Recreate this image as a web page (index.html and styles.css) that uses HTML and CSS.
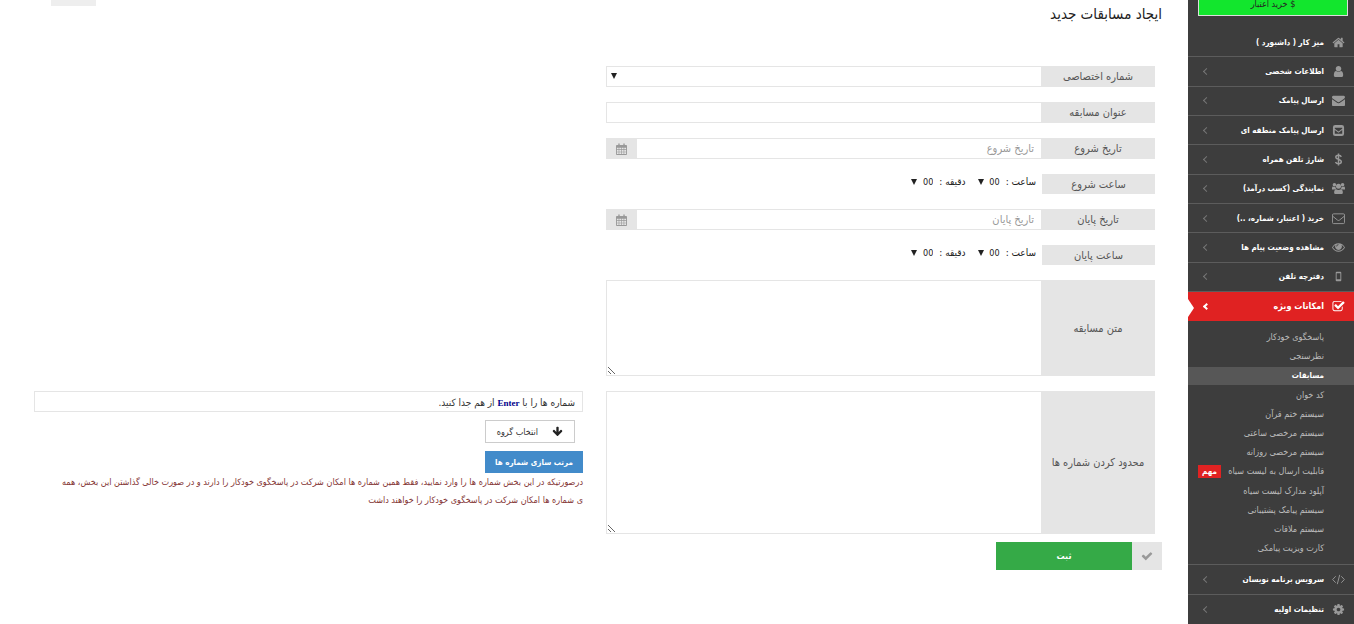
FILE: index.html
```html
<!DOCTYPE html>
<html lang="fa" dir="rtl">
<head>
  <meta charset="UTF-8">
  <meta name="viewport" content="width=device-width, initial-scale=1">
  <title>ایجاد مسابقات جدید</title>
  <link rel="stylesheet" href="styles.css">
</head>
<body>

  <aside class="sidebar">
    <a href="#" class="credit">$ خرید اعتبار</a>

    <ul class="menu">
      <li><a href="#">
        <svg class="icon" viewBox="0 0 1792 1792"><path d="M1472 992v480q0 26-19 45t-45 19h-384v-384h-256v384h-384q-26 0-45-19t-19-45v-480q0-1 .5-3t.5-3l575-474 575 474q1 2 1 6zm223-69l-62 74q-8 9-21 11h-3q-13 0-21-7l-692-577-692 577q-12 8-24 7-13-2-21-11l-62-74q-8-10-7-23.5t11-21.5l719-599q32-26 76-26t76 26l244 204v-195q0-14 9-23t23-9h192q14 0 23 9t9 23v408l219 182q10 8 11 21.5t-7 23.5z"/></svg>
        <span>میز کار ( داشبورد )</span></a></li>
      <li><a href="#">
        <svg class="icon" viewBox="0 0 1792 1792"><path d="M1536 1399q0 109-62.5 187t-150.5 78h-854q-88 0-150.5-78t-62.5-187q0-85 8.5-160.5t31.5-152 58.5-131 94-89 134.5-34.5q131 128 313 128t313-128q76 0 134.5 34.5t94 89 58.5 131 31.5 152 8.5 160.5zm-256-887q0 159-112.5 271.5t-271.5 112.5-271.5-112.5-112.5-271.5 112.5-271.5 271.5-112.5 271.5 112.5 112.5 271.5z"/></svg>
        <span>اطلاعات شخصی</span><i class="arrow"></i></a></li>
      <li><a href="#">
        <svg class="icon" viewBox="0 0 1792 1792"><path d="M1792 710v794q0 66-47 113t-113 47h-1472q-66 0-113-47t-47-113v-794q44 49 101 87 362 246 497 345 57 42 92.5 65.5t94.5 48 110 24.5h2q51 0 110-24.5t94.5-48 92.5-65.5q170-123 498-345 57-39 100-87zm0-294q0 79-49 151t-122 123q-376 261-468 325-10 7-42.5 31t-54 38.5-52 32.5-57.5 27-50 9h-2q-23 0-50-9t-57.5-27-52-32.5-54-38.5-42.5-31q-91-64-262-182.5t-205-142.5q-62-42-117-115.5t-55-136.5q0-78 41.5-130t118.5-52h1472q65 0 112.5 47t47.5 113z"/></svg>
        <span>ارسال پیامک</span><i class="arrow"></i></a></li>
      <li><a href="#">
        <svg class="icon" viewBox="0 0 14 14"><path fill-rule="evenodd" d="M3.500 1h7a2.500 2.500 0 0 1 2.500 2.500v7a2.500 2.500 0 0 1-2.500 2.500h-7a2.500 2.500 0 0 1-2.500-2.500v-7a2.500 2.500 0 0 1 2.500-2.500zM3 4v1l4 3 4-3v-1zM3 6.500v4h8v-4l-4 3z"/></svg>
        <span>ارسال پیامک منطقه ای</span><i class="arrow"></i></a></li>
      <li><a href="#">
        <svg class="icon line" viewBox="0 0 14 14"><path stroke-width="1.600" d="M10 4.200C9.500 3 8.500 2.500 7 2.500 5.200 2.500 4.100 3.300 4.100 4.600 4.100 7.500 10 6.200 10 9.300c0 1.400-1.200 2.200-3 2.200-1.600 0-2.700-.6-3.200-1.900M7 .5v13"/></svg>
        <span>شارژ تلفن همراه</span><i class="arrow"></i></a></li>
      <li><a href="#">
        <svg class="icon" viewBox="0 0 14 14"><circle cx="2.600" cy="3" r="1.900"/><circle cx="11.400" cy="3" r="1.900"/><circle cx="7" cy="4.600" r="2.700"/><path d="M0 8V6.500C0 5.400.5 4.800 1.200 4.800c.8.600 1.700.7 2.500.4 0 1 .3 1.700.8 2.300C3.600 7.500 3 7.700 2.600 8zM14 8V6.500c0-1.100-.5-1.700-1.200-1.700-.8.600-1.700.7-2.500.4 0 1-.3 1.700-.8 2.300.9 0 1.500.2 1.900.5zM2.300 11.500C2.300 9 3 7.800 4.500 7.700c1.600 1.100 3.400 1.100 5 0 1.500.1 2.200 1.300 2.200 3.800 0 1-.7 1.500-1.600 1.500H3.900c-.9 0-1.600-.5-1.600-1.500z"/></svg>
        <span>نمایندگی (کسب درآمد)</span><i class="arrow"></i></a></li>
      <li><a href="#">
        <svg class="icon line" viewBox="0 0 14 14"><rect x=".5" y="2" width="13" height="10.500" rx="1.200"/><path d="M.7 4.500 6 8.800q1 .7 2 0l5.300-4.300"/></svg>
        <span>خرید ( اعتبار، شماره، ..)</span><i class="arrow"></i></a></li>
      <li><a href="#">
        <svg class="icon" viewBox="0 0 14 14"><path fill-rule="evenodd" d="M7 2.500c3 0 5.500 1.700 7 4.500-1.500 2.800-4 4.500-7 4.500S1.500 9.800 0 7c1.500-2.800 4-4.500 7-4.500zM3.700 4.300C2.600 4.900 1.700 5.800 1 7c1.400 2.200 3.600 3.500 6 3.500S11.600 9.200 13 7c-.7-1.200-1.600-2.100-2.700-2.700a3.700 3.700 0 1 1-6.600 0zM7 3.500A2.400 2.400 0 0 0 4.600 6h.8A1.700 1.700 0 0 1 7 4.300z"/></svg>
        <span>مشاهده وضعیت پیام ها</span><i class="arrow"></i></a></li>
      <li><a href="#">
        <svg class="icon" viewBox="0 0 14 14"><path fill-rule="evenodd" d="M5 2h4a1 1 0 0 1 1 1v8a1 1 0 0 1-1 1H5a1 1 0 0 1-1-1V3a1 1 0 0 1 1-1zM5 3.500v6.500h4V3.500z"/></svg>
        <span>دفترچه تلفن</span><i class="arrow"></i></a></li>
      <li class="active"><a href="#">
        <svg class="icon" viewBox="0 0 1792 1792"><path d="M1472 930v318q0 119-84.500 203.500t-203.500 84.500h-832q-119 0-203.500-84.500t-84.500-203.500v-832q0-119 84.500-203.500t203.500-84.500h832q63 0 117 25 15 7 18 23 3 17-9 29l-49 49q-10 10-23 10-3 0-9-2-23-6-45-6h-832q-66 0-113 47t-47 113v832q0 66 47 113t113 47h832q66 0 113-47t47-113v-254q0-13 9-22l64-64q10-10 23-10 6 0 12 3 20 8 20 29zm231-489l-814 814q-24 24-57 24t-57-24l-430-430q-24-24-24-57t24-57l110-110q24-24 57-24t57 24l263 263 647-647q24-24 57-24t57 24l110 110q24 24 24 57t-24 57z"/></svg>
        <span>امکانات ویژه</span><i class="arrow"></i></a></li>
      <li class="sub">
        <ul class="submenu">
          <li><a href="#">پاسخگوی خودکار</a></li>
          <li><a href="#">نظرسنجی</a></li>
          <li class="current"><a href="#">مسابقات</a></li>
          <li><a href="#">کد خوان</a></li>
          <li><a href="#">سیستم ختم قرآن</a></li>
          <li><a href="#">سیستم مرخصی ساعتی</a></li>
          <li><a href="#">سیستم مرخصی روزانه</a></li>
          <li><a href="#">قابلیت ارسال به لیست سیاه <span class="badge">مهم</span></a></li>
          <li><a href="#">آپلود مدارک لیست سیاه</a></li>
          <li><a href="#">سیستم پیامک پشتیبانی</a></li>
          <li><a href="#">سیستم ملاقات</a></li>
          <li><a href="#">کارت ویزیت پیامکی</a></li>
        </ul>
      </li>
      <li><a href="#">
        <svg class="icon line" viewBox="0 0 14 14"><path d="M4 3.500.7 7 4 10.500M10 3.500 13.300 7 10 10.500M8.300 2 5.700 12"/></svg>
        <span>سرویس برنامه نویسان</span><i class="arrow"></i></a></li>
      <li><a href="#">
        <svg class="icon" viewBox="0 0 1792 1792"><path d="M1152 896q0-106-75-181t-181-75-181 75-75 181 75 181 181 75 181-75 75-181zm512-109v222q0 12-8 23t-20 13l-185 28q-19 54-39 91 35 50 107 138 10 12 10 25t-9 23q-27 37-99 108t-94 71q-12 0-26-9l-138-108q-44 23-91 38-16 136-29 186-7 28-36 28h-222q-14 0-24.500-8.500t-11.500-21.500l-28-184q-49-16-90-37l-141 107q-10 9-25 9-14 0-25-11-126-114-165-168-7-10-7-23 0-12 8-23 15-21 51-66.500t54-70.500q-27-50-41-99l-183-27q-13-2-21-12.500t-8-23.500v-222q0-12 8-23t19-13l186-28q14-46 39-92-40-57-107-138-10-12-10-24 0-10 9-23 26-36 98.500-107.500t94.500-71.500q13 0 26 10l138 107q44-23 91-38 16-136 29-186 7-28 36-28h222q14 0 24.500 8.500t11.500 21.500l28 184q49 16 90 37l142-107q9-9 24-9 13 0 25 10 129 119 165 170 7 8 7 22 0 12-8 23-15 21-51 66.500t-54 70.500q26 50 41 98l183 28q13 2 21 12.500t8 23.500z"/></svg>
        <span>تنظیمات اولیه</span><i class="arrow"></i></a></li>
    </ul>
  </aside>

  <main class="content">
    <div class="tab"></div>
    <h1>ایجاد مسابقات جدید</h1>

    <form class="form">
      <div class="fields">
        <div class="row">
          <label for="number">شماره اختصاصی</label>
          <span class="select wide"><select id="number"><option></option></select></span>
        </div>
        <div class="row">
          <label for="title">عنوان مسابقه</label>
          <input type="text" id="title">
        </div>
        <div class="row">
          <label for="startDate">تاریخ شروع</label>
          <input type="text" id="startDate" placeholder="تاریخ شروع">
          <span class="addon"><svg viewBox="0 0 12 13"><path fill-rule="evenodd" d="M1 2h1.500V.5h1.500V2h4V.5h1.500V2H11a1 1 0 0 1 1 1v9a1 1 0 0 1-1 1H1a1 1 0 0 1-1-1V3a1 1 0 0 1 1-1zM1 5v1.900h1.900V5zM3.600 5v1.900h2V5zM6.300 5v1.900h2V5zM9 5v1.900h2V5zM1 7.600v1.800h1.900V7.600zM3.600 7.600v1.800h2V7.600zM6.300 7.600v1.800h2V7.600zM9 7.600v1.800h2V7.600zM1 10.100V12h1.900v-1.900zM3.600 10.100V12h2v-1.900zM6.300 10.100V12h2v-1.900zM9 10.100V12h2v-1.900z"/></svg></span>
        </div>
        <div class="row time">
          <span class="label">ساعت شروع</span>
          <label for="startHour">ساعت :</label>
          <span class="select"><select id="startHour"><option>00</option></select></span>
          <label for="startMin">دقیقه :</label>
          <span class="select"><select id="startMin"><option>00</option></select></span>
        </div>
        <div class="row">
          <label for="endDate">تاریخ پایان</label>
          <input type="text" id="endDate" placeholder="تاریخ پایان">
          <span class="addon"><svg viewBox="0 0 12 13"><path fill-rule="evenodd" d="M1 2h1.500V.5h1.500V2h4V.5h1.500V2H11a1 1 0 0 1 1 1v9a1 1 0 0 1-1 1H1a1 1 0 0 1-1-1V3a1 1 0 0 1 1-1zM1 5v1.900h1.900V5zM3.600 5v1.900h2V5zM6.300 5v1.900h2V5zM9 5v1.900h2V5zM1 7.600v1.800h1.900V7.600zM3.600 7.600v1.800h2V7.600zM6.300 7.600v1.800h2V7.600zM9 7.600v1.800h2V7.600zM1 10.100V12h1.900v-1.900zM3.600 10.100V12h2v-1.900zM6.300 10.100V12h2v-1.900zM9 10.100V12h2v-1.900z"/></svg></span>
        </div>
        <div class="row time">
          <span class="label">ساعت پایان</span>
          <label for="endHour">ساعت :</label>
          <span class="select"><select id="endHour"><option>00</option></select></span>
          <label for="endMin">دقیقه :</label>
          <span class="select"><select id="endMin"><option>00</option></select></span>
        </div>
        <div class="row">
          <label for="text">متن مسابقه</label>
          <textarea id="text" class="short"></textarea>
        </div>
        <div class="row">
          <label for="numbers">محدود کردن شماره ها</label>
          <textarea id="numbers" class="tall"></textarea>
        </div>
        <div class="submit">
          <span class="tick"><svg viewBox="0 0 1792 1792"><path d="M1671 566q0 40-28 68l-724 724-136 136q-28 28-68 28t-68-28l-136-136-362-362q-28-28-28-68t28-68l136-136q28-28 68-28t68 28l294 295 656-657q28-28 68-28t68 28l136 136q28 28 28 68z"/></svg></span>
          <button type="submit">ثبت</button>
        </div>
      </div>

      <div class="help">
        <p class="hint">شماره ها را با <b>Enter</b> از هم جدا کنید.</p>
        <button type="button" class="group">
          <svg viewBox="0 0 1792 1792"><path d="M1675 832q0 53-37 90l-651 652q-39 37-91 37-53 0-90-37l-651-652q-38-36-38-90 0-53 38-91l74-75q39-37 91-37 53 0 90 37l294 294v-704q0-52 38-90t90-38h128q52 0 90 38t38 90v704l294-294q37-37 90-37 52 0 91 37l75 75q37 39 37 91z"/></svg>
          انتخاب گروه
        </button>
        <button type="button" class="sort">مرتب سازی شماره ها</button>
        <p class="note">درصورتیکه در این بخش شماره ها را وارد نمایید، فقط همین شماره ها امکان شرکت در پاسخگوی خودکار را دارند و در صورت خالی گذاشتن این بخش، همه<br>ی شماره ها امکان شرکت در پاسخگوی خودکار را خواهند داشت</p>
      </div>
    </form>
  </main>

</body>
</html>
```
FILE: styles.css
```css
* {
  box-sizing: border-box;
}

body {
  margin: 0;
  display: flex;
  min-height: 100vh;
  background: #fff;
  color: #333;
  font-family: 'DejaVu Sans Condensed', 'DejaVu Sans', sans-serif;
  font-size: 9px;
}

a {
  color: inherit;
  text-decoration: none;
}

ul {
  list-style: none;
  margin: 0;
  padding: 0;
}

button, input, select, textarea {
  font: inherit;
  color: inherit;
  border-radius: 0;
  margin: 0;
}

/* sidebar */
.sidebar {
  display: flex;
  flex-direction: column;
  flex: none;
  width: 166px;
  background: #3d3d3d;
  color: #fff;
}

.credit {
  height: 16px;
  margin: 0 6px 12px 10px;
  border: 1px solid #ddd;
  border-top: 0;
  background: #12e62d;
  color: #222;
  line-height: 9px;
  text-align: center;
}

.menu {
  display: flex;
  flex-direction: column;
  flex: 1;
}

.menu > li {
  display: flex;
  flex: 1 0 29px;
  border-bottom: 1px solid #5c5c5c;
}

.menu > li:last-child {
  border-bottom: 0;
}

.menu > li > a {
  display: flex;
  align-items: center;
  flex: 1;
  gap: 8px;
  padding: 0 9px 0 16px;
  font-size: 8px;
  font-weight: bold;
}

.icon {
  width: 13px;
  height: 13px;
  fill: #999;
}

.icon.line {
  fill: none;
  stroke: #999;
}

.arrow {
  width: 5px;
  height: 5px;
  margin-right: auto;
  border: solid #777;
  border-width: 0 0 1px 1px;
  transform: rotate(45deg);
}

.menu > .active {
  position: relative;
  background: #e02222;
  border-color: #e02222;
}

.menu > .active > a {
  font-size: 9px;
}

.active .icon {
  fill: #fff;
}

.active .arrow {
  border-color: #fff;
  border-width: 0 0 2px 2px;
}

.active::after {
  content: "";
  position: absolute;
  left: 0;
  top: 7px;
  border: solid transparent;
  border-width: 9px 0 9px 6px;
  border-left-color: #fff;
}

.menu > .sub {
  flex: none;
}

.submenu {
  display: flex;
  flex-direction: column;
  justify-content: space-between;
  flex: 1;
  height: 243px;
  padding: 7px 0;
  line-height: 18px;
  color: #bbb;
}

.submenu a {
  display: flex;
  align-items: center;
  justify-content: space-between;
  height: 18px;
  padding: 0 30px 0 10px;
  white-space: nowrap;
}

.submenu .current {
  background: #575757;
  color: #fff;
  font-size: 8px;
  font-weight: bold;
}

.badge {
  padding: 0 4px;
  background: #e02222;
  color: #fff;
  font-size: 8px;
  font-weight: bold;
  line-height: 13px;
}

/* page */
.content {
  flex: 1;
  min-width: 0;
  padding: 0 33px 0 34px;
}

.tab {
  width: 45px;
  height: 6px;
  margin: 0 auto 0 17px;
  background: #eee;
}

h1 {
  margin: 0 -7px 44px 0;
  color: #222;
  font-size: 15px;
  font-weight: normal;
  line-height: 16px;
}

.form {
  display: grid;
  grid-template-columns: 1fr 1fr;
  gap: 23px;
}

.fields {
  display: flex;
  flex-direction: column;
  gap: 15px;
  min-width: 0;
}

.row {
  display: flex;
  min-height: 21px;
}

.row > label:first-child,
.label {
  display: flex;
  align-items: center;
  justify-content: center;
  flex: none;
  width: 114px;
  background: #e5e5e5;
  color: #555;
  font-size: 11px;
}

.row input,
.row textarea,
.wide {
  flex: 1;
  min-width: 0;
  border: 1px solid #e5e5e5;
  border-right: 0;
  background: #fff;
  padding: 0 7px;
  outline: none;
}

.row input {
  font-size: 11px;
}

.row input::placeholder {
  color: #999;
}

.row .short {
  height: 96px;
}

.row .tall {
  height: 143px;
}

.select {
  position: relative;
  display: flex;
}

.select select {
  flex: 1;
  appearance: none;
  border: 0;
  padding: 0;
  background: none;
}

.select::after {
  content: "";
  position: absolute;
  left: 4px;
  top: 6px;
  border: solid transparent;
  border-width: 6px 3px 0;
  border-top-color: #222;
}

.addon {
  display: flex;
  align-items: center;
  justify-content: center;
  width: 30px;
  background: #e5e5e5;
}

.addon svg {
  width: 11px;
  height: 12px;
  fill: #999;
}

.time {
  min-height: 20px;
  color: #222;
}

.time label {
  margin: 2px 6px 0;
  font-size: 10px;
  line-height: 12px;
}

.time .label {
  width: 113px;
}

.time .select {
  width: 28px;
  height: 16px;
}

.time .select::after {
  left: 6px;
  top: 5px;
}

.submit {
  display: flex;
  width: 166px;
  height: 28px;
  margin: -7px -7px 0 0;
}

.tick {
  display: flex;
  align-items: center;
  justify-content: center;
  width: 30px;
  background: #e5e5e5;
}

.tick svg {
  width: 12px;
  height: 12px;
  fill: #999;
}

.submit button {
  flex: 1;
  border: 0;
  background: #35aa47;
  color: #fff;
  font-weight: bold;
}

/* help beside the last textarea */
.help {
  display: flex;
  flex-direction: column;
  align-items: flex-start;
  min-width: 0;
  margin-top: 325px;
}

.hint {
  align-self: stretch;
  height: 21px;
  margin: 0 0 8px;
  padding: 0 7px;
  border: 1px solid #e5e5e5;
  font-size: 10px;
  line-height: 21px;
}

.hint b {
  color: #00008b;
  font: bold 9px 'Liberation Serif', serif;
}

.group {
  display: flex;
  align-items: center;
  gap: 14px;
  height: 23px;
  margin: 0 8px 8px 0;
  padding: 0 11px;
  border: 1px solid #ccc;
  background: #fff;
}

.group svg {
  width: 11px;
  height: 11px;
  fill: #222;
}

.sort {
  height: 22px;
  padding: 0 10px;
  border: 0;
  background: #428bca;
  color: #fff;
  font-size: 8px;
  font-weight: bold;
}

.note {
  margin: 0;
  color: #843534;
  line-height: 18px;
}
```
